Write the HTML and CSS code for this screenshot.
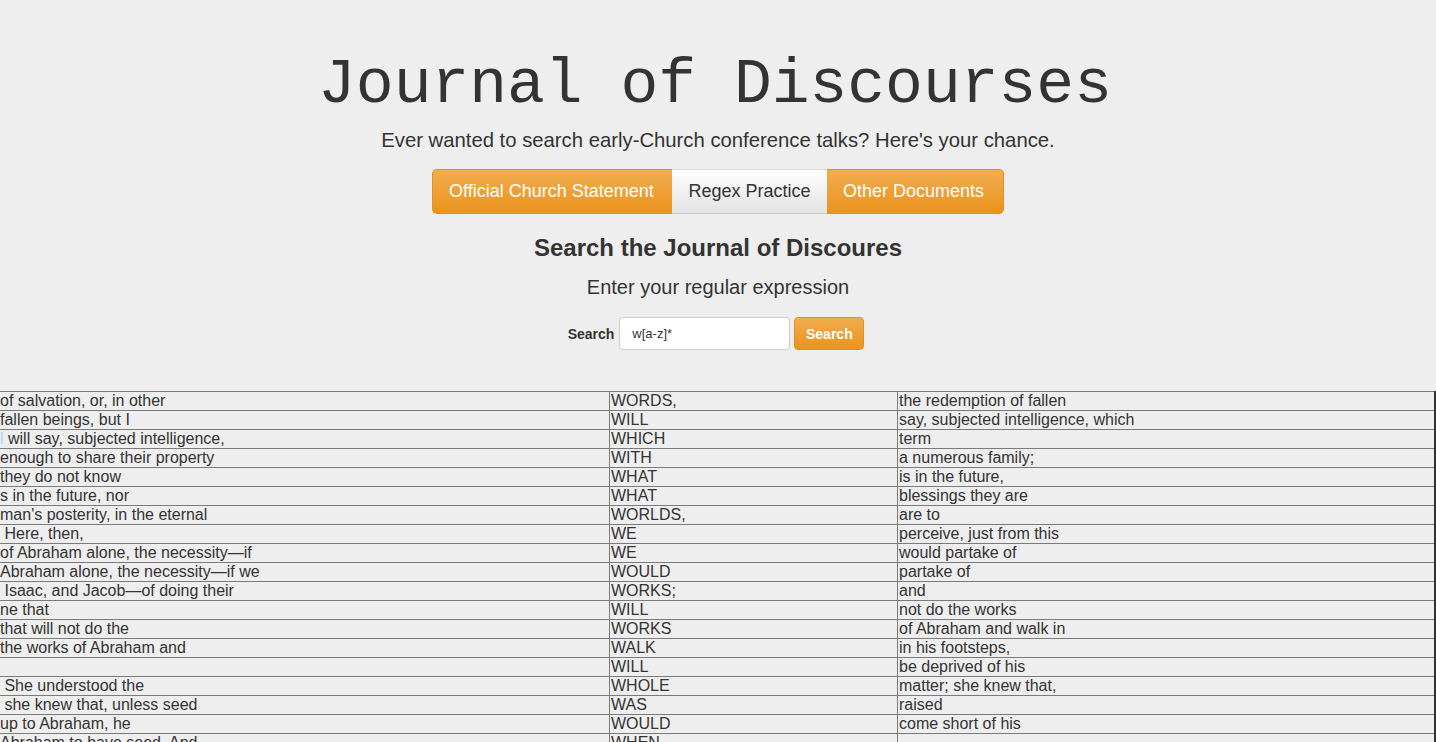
FILE: index.html
```html
<!DOCTYPE html>
<html>
<head>
<meta charset="utf-8">
<title>Journal of Discourses</title>
<link rel="stylesheet" href="styles.css">
</head>
<body>
<header class="hero">
  <h1 class="title">Journal of Discourses</h1>
  <p class="lead">Ever wanted to search early-Church conference talks? Here's your chance.</p>
  <nav class="btn-group">
    <a class="btn btn-orange first">Official Church Statement</a>
    <a class="btn btn-plain">Regex Practice</a>
    <a class="btn btn-orange last">Other Documents</a>
  </nav>
  <h2 class="section-title">Search the Journal of Discoures</h2>
  <p class="sub">Enter your regular expression</p>
  <form class="search-form">
    <label class="search-label">Search</label>
    <input class="search-input" type="text" value="w[a-z]*">
    <button class="search-btn" type="button">Search</button>
  </form>
</header>
<div class="results">
<table class="kwic">
  <tr><td class="pre">of salvation, or, in other</td><td class="key">WORDS,</td><td class="post">the redemption of fallen</td></tr>
  <tr><td class="pre">fallen beings, but I</td><td class="key">WILL</td><td class="post">say, subjected intelligence, which</td></tr>
  <tr><td class="pre"><span class="sel">l</span> will say, subjected intelligence,</td><td class="key">WHICH</td><td class="post">term</td></tr>
  <tr><td class="pre">enough to share their property</td><td class="key">WITH</td><td class="post">a numerous family;</td></tr>
  <tr><td class="pre">they do not know</td><td class="key">WHAT</td><td class="post">is in the future,</td></tr>
  <tr><td class="pre">s in the future, nor</td><td class="key">WHAT</td><td class="post">blessings they are</td></tr>
  <tr><td class="pre">man's posterity, in the eternal</td><td class="key">WORLDS,</td><td class="post">are to</td></tr>
  <tr><td class="pre">&nbsp;Here, then,</td><td class="key">WE</td><td class="post">perceive, just from this</td></tr>
  <tr><td class="pre">of Abraham alone, the necessity—if</td><td class="key">WE</td><td class="post">would partake of</td></tr>
  <tr><td class="pre">Abraham alone, the necessity—if we</td><td class="key">WOULD</td><td class="post">partake of</td></tr>
  <tr><td class="pre">&nbsp;Isaac, and Jacob—of doing their</td><td class="key">WORKS;</td><td class="post">and</td></tr>
  <tr><td class="pre">ne that</td><td class="key">WILL</td><td class="post">not do the works</td></tr>
  <tr><td class="pre">that will not do the</td><td class="key">WORKS</td><td class="post">of Abraham and walk in</td></tr>
  <tr><td class="pre">the works of Abraham and</td><td class="key">WALK</td><td class="post">in his footsteps,</td></tr>
  <tr><td class="pre"></td><td class="key">WILL</td><td class="post">be deprived of his</td></tr>
  <tr><td class="pre">&nbsp;She understood the</td><td class="key">WHOLE</td><td class="post">matter; she knew that,</td></tr>
  <tr><td class="pre">&nbsp;she knew that, unless seed</td><td class="key">WAS</td><td class="post">raised</td></tr>
  <tr><td class="pre">up to Abraham, he</td><td class="key">WOULD</td><td class="post">come short of his</td></tr>
  <tr><td class="pre">Abraham to have seed. And</td><td class="key">WHEN</td><td class="post"></td></tr>
</table>
</div>
</body>
</html>
```
FILE: styles.css
```css
html, body {
  margin: 0;
  padding: 0;
}
body {
  background: #eeeeee;
  color: #333333;
  font-family: "Liberation Sans", Arial, sans-serif;
  overflow: hidden;
}
.hero {
  display: flex;
  flex-direction: column;
  align-items: center;
  padding-top: 50px;
}
.title {
  font-family: "Liberation Mono", "Courier New", monospace;
  font-weight: normal;
  font-size: 63px;
  line-height: 72px;
  margin: 0 0 0 -6px;
  color: #333;
}
.lead {
  font-size: 20.3px;
  line-height: 28px;
  margin: 4px 0 0 0;
  color: #333;
}
.btn-group {
  display: flex;
  margin-top: 15px;
}
.btn {
  display: flex;
  align-items: center;
  height: 45px;
  font-size: 18px;
  padding: 0 16px;
  box-sizing: border-box;
}
.btn-orange {
  color: #ffffff;
  background: linear-gradient(#f1ad50, #ea931d);
  border: 1px solid #e2901f;
}
.btn-orange.first {
  border-radius: 5px 0 0 5px;
  border-right: none;
  width: 240px;
}
.btn-orange.last {
  border-radius: 0 5px 5px 0;
  border-left: none;
  width: 177px;
}
.btn-plain {
  color: #333;
  background: linear-gradient(#ffffff, #e2e2e2);
  border-top: 1px solid #dcdcdc;
  border-bottom: 1px solid #c8c8c8;
  width: 155px;
  justify-content: center;
}
.section-title {
  font-size: 24px;
  font-weight: bold;
  line-height: 30px;
  margin: 19px 0 0 0;
}
.sub {
  font-size: 20px;
  line-height: 28px;
  margin: 10px 0 0 0;
}
.search-form {
  display: flex;
  align-items: center;
  margin-top: 16px;
  margin-left: -4px;
}
.search-label {
  font-size: 14px;
  font-weight: bold;
  margin-right: 5px;
}
.search-input {
  width: 171px;
  height: 33px;
  box-sizing: border-box;
  border: 1px solid #cccccc;
  border-radius: 4px;
  background: #ffffff;
  padding: 0 12px;
  font-family: "Liberation Sans", Arial, sans-serif;
  font-size: 13px;
  color: #333;
  margin-right: 4px;
}
.search-btn {
  height: 33px;
  width: 70px;
  border: 1px solid #e2901f;
  border-radius: 4px;
  background: linear-gradient(#f1ad50, #ea931d);
  color: #ffffff;
  font-family: "Liberation Sans", Arial, sans-serif;
  font-size: 14px;
  font-weight: bold;
  padding: 0;
}
.results {
  margin-top: 41px;
}
.kwic {
  width: 1436px;
  border-collapse: collapse;
  font-size: 16px;
  color: #333;
}
.kwic td {
  height: 18px;
  padding: 0 1px;
  line-height: 18px;
  border-top: 1px solid #7a7a7a;
  border-bottom: 1px solid #7a7a7a;
  white-space: nowrap;
  vertical-align: middle;
}
.kwic td.pre {
  width: 608px;
  padding-left: 0;
}
.kwic td.key {
  width: 285px;
  border-left: 1px solid #7a7a7a;
}
.kwic td.post {
  border-left: 1px solid #7a7a7a;
  border-right: 2px solid #333;
}
.sel {
  color: #b7d3f0;
}
```
